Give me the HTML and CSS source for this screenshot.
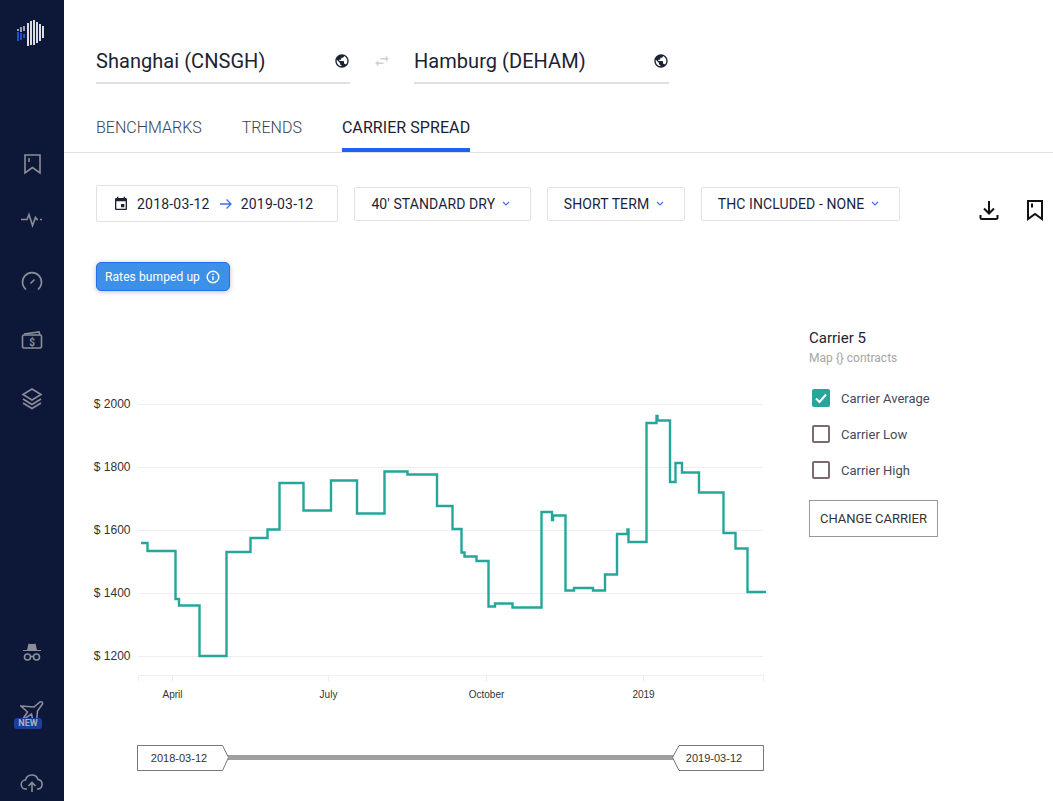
FILE: index.html
```html
<!DOCTYPE html>
<html lang="en">
<head>
  <meta charset="UTF-8" />
  <title>Carrier Spread</title>
  <link rel="stylesheet" href="styles.css">
</head>
<body>
  <nav class="sidebar">
    <svg class="logo" width="34" height="30" viewBox="16 18 34 30">
      <g stroke="#fff" stroke-width="1.7">
        <path d="M19 29v2M22 27v5M25 26v5" opacity="0.7"/>
        <path d="M29 23v23M32 21v24M35 20v25M38 22v21M41 24v17M44 26v12"/>
      </g>
      <g stroke="#2159d8" stroke-width="1.8">
        <path d="M19 32v9M22 33v7M25 34v4"/>
      </g>
    </svg>
    <div class="nav-group">
      <a class="nav-item"><svg width="24" height="24" viewBox="0 0 24 24"><path d="M5 3h15v18l-7.500-5.500L5 21z"/><path d="M9 6v4"/></svg></a>
      <a class="nav-item"><svg width="24" height="24" viewBox="0 0 24 24"><path d="M1 8.500h6l2-5 3.500 11 3-8 1.500 2h1M20 8.500h2"/></svg></a>
      <a class="nav-item"><svg width="24" height="24" viewBox="0 0 24 24"><path d="M6 20.500a9.500 9.500 0 1 1 12 0"/><path d="M10.500 14.500l4-4"/></svg></a>
      <a class="nav-item"><svg width="24" height="24" viewBox="0 0 24 24"><path d="M4 6l15-2 1 3"/><rect x="2.500" y="7" width="19" height="13" rx="1.500"/><text x="12" y="17.500" class="nav-dollar">$</text></svg></a>
      <a class="nav-item"><svg width="24" height="24" viewBox="0 0 24 24"><path d="M12 3l9 5.500-9 5.500-9-5.500z"/><path d="M3 13l9 5.500 9-5.500M3 17l9 5.500 9-5.500"/></svg></a>
    </div>
    <div class="nav-group nav-bottom">
      <a class="nav-item"><svg width="24" height="24" viewBox="0 0 24 24"><path class="solid" d="M7 10l1.500-6.500q3.500 1 7 0L17 10h4v1H3v-1z"/><circle cx="7.500" cy="17" r="3"/><circle cx="16.500" cy="17" r="3"/><path d="M10.500 16.500h3"/></svg></a>
      <a class="nav-item nav-new">
        <svg width="24" height="24" viewBox="0 0 24 24"><path d="M1 6l13 1 6-5q3-1 2.500 2l-5 7-1 11-3 1-2-9-6 4-2 0 4-6z"/></svg>
        <span class="new-tag">NEW</span>
      </a>
      <a class="nav-item"><svg width="24" height="24" viewBox="0 0 24 24"><path d="M7 19H6a4.500 4.500 0 0 1-.5-9A6.500 6.500 0 0 1 18 9.500a4.800 4.800 0 0 1 0 9.500h-1"/><path d="M12 22v-9M8.500 16l3.500-3.500 3.500 3.500"/></svg></a>
    </div>
  </nav>

  <main class="main">
    <div class="route">
      <div class="port port-from">
        <span>Shanghai (CNSGH)</span>
        <svg width="16" height="16" viewBox="0 0 24 24"><path class="fill-dark" d="M12 2C6.480 2 2 6.480 2 12s4.480 10 10 10 10-4.480 10-10S17.520 2 12 2zm-1 17.930c-3.950-.490-7-3.850-7-7.930 0-.620.080-1.210.210-1.790L9 15v1c0 1.100.900 2 2 2v1.930zm6.900-2.540c-.260-.810-1-1.390-1.900-1.390h-1v-3c0-.550-.450-1-1-1H8v-2h2c.550 0 1-.450 1-1V7h2c1.100 0 2-.900 2-2v-.410c2.930 1.190 5 4.060 5 7.410 0 2.080-.800 3.970-2.100 5.390z"/></svg>
      </div>
      <svg class="swap" width="18" height="18" viewBox="0 0 24 24"><path d="M6.990 11L3 15l3.990 4v-3H14v-2H6.990v-3zM21 9l-3.990-4v3H10v2h7.010v3L21 9z"/></svg>
      <div class="port port-to">
        <span>Hamburg (DEHAM)</span>
        <svg width="16" height="16" viewBox="0 0 24 24"><path class="fill-dark" d="M12 2C6.480 2 2 6.480 2 12s4.480 10 10 10 10-4.480 10-10S17.520 2 12 2zm-1 17.930c-3.950-.490-7-3.850-7-7.930 0-.620.080-1.210.210-1.790L9 15v1c0 1.100.900 2 2 2v1.930zm6.900-2.540c-.260-.810-1-1.390-1.900-1.390h-1v-3c0-.550-.450-1-1-1H8v-2h2c.550 0 1-.450 1-1V7h2c1.100 0 2-.900 2-2v-.410c2.930 1.190 5 4.060 5 7.410 0 2.080-.800 3.970-2.100 5.390z"/></svg>
      </div>
    </div>

    <div class="tabs">
      <a class="tab">BENCHMARKS</a>
      <a class="tab">TRENDS</a>
      <a class="tab active">CARRIER SPREAD</a>
    </div>

    <div class="filters">
      <div class="filter filter-date">
        <svg width="16" height="16" viewBox="0 0 24 24"><path class="fill-dark" d="M17 12h-5v5h5v-5zM16 1v2H8V1H6v2H5c-1.110 0-1.990.900-1.990 2L3 19c0 1.100.890 2 2 2h14c1.100 0 2-.900 2-2V5c0-1.100-.900-2-2-2h-1V1h-2zm3 18H5V8h14v11z"/></svg>
        <span>2018-03-12</span>
        <svg class="date-arrow" width="14" height="12" viewBox="0 0 14 12"><path class="arrow" d="M1 6h11M7.500 1.500L12 6l-4.500 4.500"/></svg>
        <span>2019-03-12</span>
      </div>
      <div class="filter">40' STANDARD DRY <svg class="caret" width="8" height="6" viewBox="0 0 8 6"><path d="M1 1l3 3 3-3"/></svg></div>
      <div class="filter">SHORT TERM <svg class="caret" width="8" height="6" viewBox="0 0 8 6"><path d="M1 1l3 3 3-3"/></svg></div>
      <div class="filter">THC INCLUDED - NONE <svg class="caret" width="8" height="6" viewBox="0 0 8 6"><path d="M1 1l3 3 3-3"/></svg></div>
      <div class="actions">
        <svg width="24" height="24" viewBox="0 0 24 24"><path class="icon-dark" d="M12 3v12M7 10.500l5 5 5-5M3.500 17v2.500q0 1.500 1.500 1.500h14q1.500 0 1.500-1.500V17"/></svg>
        <svg width="24" height="24" viewBox="0 0 24 24"><path class="icon-dark" d="M5 3h14v18l-7-5-7 5z"/><path class="icon-dark" d="M9 5.500v4"/></svg>
      </div>
    </div>

    <div class="bump">
      Rates bumped up
      <svg width="14" height="14" viewBox="0 0 14 14"><circle cx="7" cy="7" r="5.800"/><path d="M7 6.200v4M7 3.600v1.400"/></svg>
    </div>

    <div class="content">
      <svg class="chart" width="690" height="410" viewBox="88 375 690 410">
        <g class="grid">
          <path d="M138 404.500h625M138 467.500h625M138 530.500h625M138 593.500h625M138 656.500h625"/>
          <path d="M138 675.500h625M138.500 675v6M172.500 675v6M328.500 675v6M486.500 675v6M643.500 675v6M763.500 675v6"/>
        </g>
        <g class="y-labels">
          <text x="130.500" y="408">$ 2000</text>
          <text x="130.500" y="471">$ 1800</text>
          <text x="130.500" y="534">$ 1600</text>
          <text x="130.500" y="597">$ 1400</text>
          <text x="130.500" y="660">$ 1200</text>
        </g>
        <g class="x-labels">
          <text x="172.500" y="698">April</text>
          <text x="328.500" y="698">July</text>
          <text x="486.500" y="698">October</text>
          <text x="643.500" y="698">2019</text>
        </g>
        <path class="line" d="M141 543H147.500V551H175.500V599H179V605.500H199.500V656H226.500V552H250.500V538H267.500V529.500H279.500V483H303.500V510.500H331V480.500H357V513.500H384.500V471.500H407.500V474.500H437V506H452.500V529H461.500V552.500H464.500V556.500H476.500V561H488.500V606.500H495V603.500H512.500V607.500H541.500V512H552V520H553V515.500H565.500V590.500H574V588H593V590.500H605V574.500H617V534H627.500V529.500H628.500V542H646.500V423H656.500V416H657.500V420.500H670V482H675.500V463H682V472.500H699V492.500H723.500V533H735.500V548.500H747.500V592H766"/>
        <path class="track" d="M228 757.500H674"/>
        <path class="handle" d="M137.500 745.500H222.500L228.500 757.500L222.500 770.500H137.500Z"/>
        <path class="handle" d="M763.500 745.500H679L672.500 757.500L679 770.500H763.500Z"/>
        <text class="handle-label" x="179" y="762">2018-03-12</text>
        <text class="handle-label" x="714" y="762">2019-03-12</text>
      </svg>

      <aside class="panel">
        <div class="panel-title">Carrier 5</div>
        <div class="panel-sub">Map {} contracts</div>
        <label class="check">
          <span class="box checked"><svg width="18" height="18" viewBox="0 0 18 18"><path d="M4 9.500l3.500 3.500L14 5.500"/></svg></span>
          Carrier Average
        </label>
        <label class="check"><span class="box"></span>Carrier Low</label>
        <label class="check"><span class="box"></span>Carrier High</label>
        <button class="change">CHANGE CARRIER</button>
      </aside>
    </div>
  </main>
</body>
</html>
```

FILE: styles.css
```css
html, body {
  height: 100%;
}
body {
  margin: 0;
  display: flex;
  font-family: Roboto, "Liberation Sans", sans-serif;
  background-color: #fff;
  color: #1d2233;
  overflow: hidden;
}

/* sidebar */
.sidebar {
  width: 64px;
  flex: none;
  height: 801px;
  background-color: #0d1839;
  display: flex;
  flex-direction: column;
  align-items: center;
  overflow: hidden;
}
.logo {
  margin-top: 18px;
  flex: none;
}
.nav-group {
  display: flex;
  flex-direction: column;
  gap: 34.500px;
  margin-top: 104px;
}
.nav-bottom {
  margin-top: auto;
  margin-bottom: 7px;
  gap: 0;
}
.nav-item {
  position: relative;
  display: block;
  width: 24px;
  height: 24px;
}
.nav-item svg {
  display: block;
}
.nav-item path, .nav-item rect, .nav-item circle {
  fill: none;
  stroke: #8b8e99;
  stroke-width: 1.6;
}
.nav-item .solid {
  fill: #8b8e99;
  stroke: none;
}
.nav-dollar {
  font-size: 10px;
  font-weight: 700;
  fill: #8b8e99;
  text-anchor: middle;
}
.nav-bottom .nav-item:nth-child(1) {
  margin-bottom: 36px;
}
.nav-bottom .nav-item:nth-child(2) {
  margin-bottom: 46px;
}
.new-tag {
  position: absolute;
  left: -6px;
  top: 18px;
  width: 28px;
  height: 11px;
  background-color: #1a3f9a;
  border-radius: 3px;
  color: #aab0c0;
  font-size: 9px;
  font-weight: 700;
  line-height: 11px;
  text-align: center;
}

/* main */
.main {
  flex: 1;
  min-width: 0;
}
.route {
  display: flex;
  align-items: flex-start;
  padding: 40px 0 0 32px;
}
.port {
  display: flex;
  align-items: center;
  justify-content: space-between;
  height: 42px;
  border-bottom: 2px solid #e0e0e0;
  font-size: 20px;
  letter-spacing: 0.05px;
}
.port-from {
  width: 254px;
}
.port-to {
  width: 255px;
}
.fill-dark {
  fill: #1d2233;
}
.swap {
  margin: 12px 23px 0 23px;
}
.swap path {
  fill: #cfcfcf;
}
.tabs {
  display: flex;
  gap: 40px;
  padding: 32px 0 0 32px;
  height: 36px;
  border-bottom: 1px solid #e0e0e0;
}
.tab {
  font-size: 16px;
  font-weight: 300;
  color: #39414f;
  height: 32px;
  line-height: 24px;
}
.tab.active {
  font-weight: 400;
  color: #1d2233;
  letter-spacing: 0.07px;
  border-bottom: 4px solid #2260f0;
}

.filters {
  display: flex;
  align-items: center;
  gap: 16px;
  padding: 32px 0 0 32px;
  position: relative;
}
.filter {
  display: flex;
  align-items: center;
  gap: 7px;
  height: 32px;
  padding: 0 19.500px 0 16px;
  border: 1px solid #e2e2e2;
  border-radius: 2px;
  font-size: 14px;
  color: #1a1f3d;
  letter-spacing: 0.1px;
  white-space: nowrap;
}
.filter-date {
  height: 35px;
  gap: 8px;
  padding: 0 24px 0 16px;
  letter-spacing: 0.2px;
}
.date-arrow {
  margin-left: 1px;
}
.arrow {
  fill: none;
  stroke: #3f6cf2;
  stroke-width: 1.3;
}
.caret path {
  fill: none;
  stroke: #4a6cf0;
  stroke-width: 1.2;
}
.actions {
  position: absolute;
  right: 6px;
  top: 45px;
  display: flex;
  gap: 22px;
}
.icon-dark {
  fill: none;
  stroke: #111;
  stroke-width: 2;
}
.bump {
  display: inline-flex;
  align-items: center;
  gap: 6px;
  margin: 40px 0 0 32px;
  height: 27px;
  padding: 0 9px 0 8px;
  background-color: #3d90e8;
  border: 1px solid #2a6cf0;
  border-radius: 5px;
  box-shadow: 0 1px 5px rgba(0,0,0,0.25);
  color: #fff;
  font-size: 12px;
  font-weight: 400;
  letter-spacing: 0.1px;
}
.bump svg {
  fill: none;
  stroke: #fff;
  stroke-width: 1.4;
}

.content {
  display: flex;
  align-items: flex-start;
  padding: 0 0 0 24px;
  margin-top: 84px;
}
.chart {
  flex: none;
  display: block;
}
.grid path {
  fill: none;
  stroke: #eeeeee;
  stroke-width: 1;
}
.y-labels text {
  font-family: "Liberation Sans", sans-serif;
  font-size: 12px;
  fill: #333;
  text-anchor: end;
}
.x-labels text {
  font-family: "Liberation Sans", sans-serif;
  font-size: 10px;
  fill: #333;
  text-anchor: middle;
}
.line {
  fill: none;
  stroke: #26a69a;
  stroke-width: 2.400;
}
.track {
  stroke: #a0a0a0;
  stroke-width: 5;
}
.handle {
  fill: #fff;
  stroke: #777;
  stroke-width: 1;
}
.handle-label {
  font-family: "Liberation Sans", sans-serif;
  font-size: 11px;
  fill: #333;
  text-anchor: middle;
}

.panel {
  margin: -51px 0 0 31px;
  width: 170px;
}
.panel-title {
  font-size: 15px;
  font-weight: 400;
  line-height: 18px;
  padding-top: 5px;
}
.panel-sub {
  font-size: 12px;
  color: #a6a6a6;
  line-height: 14px;
  margin-top: 4px;
  margin-bottom: 24px;
}
.check {
  display: flex;
  align-items: center;
  gap: 11px;
  height: 18px;
  margin: 0 0 18px 3px;
  font-size: 13px;
  color: #444a5a;
}
.box {
  width: 18px;
  height: 18px;
  box-sizing: border-box;
  border: 2px solid #7b6a70;
  border-radius: 2px;
  flex: none;
}
.box.checked {
  border: none;
  background-color: #26a69a;
}
.box svg {
  display: block;
}
.box svg path {
  fill: none;
  stroke: #fff;
  stroke-width: 2;
}
.change {
  display: block;
  width: 129px;
  height: 37px;
  margin-top: 21px;
  background: #fff;
  border: 1px solid #999;
  font-family: Roboto, sans-serif;
  font-size: 13px;
  color: #333;
  padding: 0;
}
```
